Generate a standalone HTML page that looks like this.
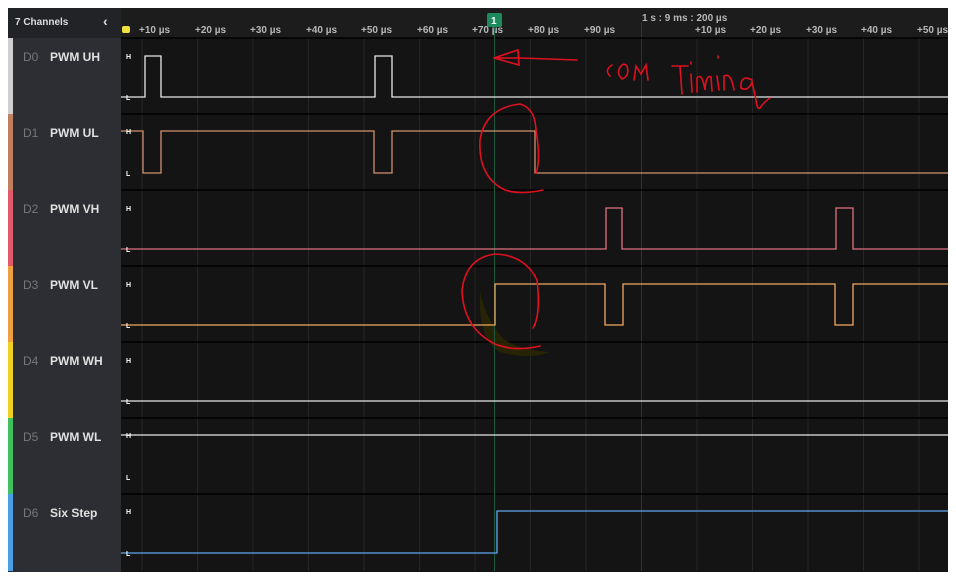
<!DOCTYPE html>
<html><head><style>
body{margin:0;background:#fff;width:956px;height:577px;overflow:hidden;font-family:"Liberation Sans",sans-serif}
.lbl{position:absolute;font-size:12px;font-weight:bold;color:#e0e0e0}
.d{position:absolute;font-size:12px;color:#777}
.t{font-size:10px;fill:#b8b8b8;font-weight:bold;font-family:"Liberation Sans",sans-serif}
.hl{font-size:7px;fill:#fff;font-weight:bold;font-family:"Liberation Sans",sans-serif}
</style></head><body>
<div style="position:absolute;left:8px;top:8px;width:940px;height:564px;background:#141414"></div>
<div style="position:absolute;left:8px;top:8px;width:113px;height:564px;background:#2d2e33"></div>
<div style="position:absolute;left:8px;top:8px;width:113px;height:30px;background:#222327"></div>
<div style="position:absolute;left:15px;top:17px;font-size:10px;color:#ddd;font-weight:bold">7 Channels</div>
<div style="position:absolute;left:103px;top:13px;font-size:14px;color:#ddd;font-weight:bold">‹</div>
<div style="position:absolute;left:8px;top:38px;width:5px;height:76px;background:#cfcfcf"></div>
<div style="position:absolute;left:8px;top:114px;width:5px;height:76px;background:#c08060"></div>
<div style="position:absolute;left:8px;top:190px;width:5px;height:76px;background:#e05a6a"></div>
<div style="position:absolute;left:8px;top:266px;width:5px;height:76px;background:#f0a040"></div>
<div style="position:absolute;left:8px;top:342px;width:5px;height:76px;background:#f0d020"></div>
<div style="position:absolute;left:8px;top:418px;width:5px;height:76px;background:#40c060"></div>
<div style="position:absolute;left:8px;top:494px;width:5px;height:77px;background:#4a9ee8"></div>
<div class="d" style="left:23px;top:50px">D0</div><div class="lbl" style="left:50px;top:50px">PWM UH</div>
<div class="d" style="left:23px;top:126px">D1</div><div class="lbl" style="left:50px;top:126px">PWM UL</div>
<div class="d" style="left:23px;top:202px">D2</div><div class="lbl" style="left:50px;top:202px">PWM VH</div>
<div class="d" style="left:23px;top:278px">D3</div><div class="lbl" style="left:50px;top:278px">PWM VL</div>
<div class="d" style="left:23px;top:354px">D4</div><div class="lbl" style="left:50px;top:354px">PWM WH</div>
<div class="d" style="left:23px;top:430px">D5</div><div class="lbl" style="left:50px;top:430px">PWM WL</div>
<div class="d" style="left:23px;top:506px">D6</div><div class="lbl" style="left:50px;top:506px">Six Step</div>
<svg width="956" height="577" style="position:absolute;left:0;top:0">
<rect x="121" y="8" width="827" height="30" fill="#1c1c1c"/>
<g stroke="#262626" stroke-width="1">
<line x1="142" y1="38" x2="142" y2="571"/><line x1="197.5" y1="38" x2="197.5" y2="571"/><line x1="253" y1="38" x2="253" y2="571"/><line x1="308.5" y1="38" x2="308.5" y2="571"/><line x1="364" y1="38" x2="364" y2="571"/><line x1="419.5" y1="38" x2="419.5" y2="571"/><line x1="475" y1="38" x2="475" y2="571"/><line x1="530.5" y1="38" x2="530.5" y2="571"/><line x1="586" y1="38" x2="586" y2="571"/><line x1="697" y1="38" x2="697" y2="571"/><line x1="752.5" y1="38" x2="752.5" y2="571"/><line x1="808" y1="38" x2="808" y2="571"/><line x1="863.5" y1="38" x2="863.5" y2="571"/><line x1="919" y1="38" x2="919" y2="571"/>
</g>
<line x1="641.5" y1="22" x2="641.5" y2="571" stroke="#333"/>
<g stroke="#000" stroke-width="1.5">
<line x1="121" y1="38" x2="948" y2="38"/><line x1="121" y1="114" x2="948" y2="114"/><line x1="121" y1="190" x2="948" y2="190"/><line x1="121" y1="266" x2="948" y2="266"/><line x1="121" y1="342" x2="948" y2="342"/><line x1="121" y1="418" x2="948" y2="418"/><line x1="121" y1="494" x2="948" y2="494"/>
</g>
<path d="M480,292 Q478,340 500,352 Q530,360 550,352 Q520,350 505,340 Q488,325 480,292Z" fill="#2a2800" opacity="0.8"/>
<rect x="122" y="26" width="8" height="7" fill="#f0e040" rx="2"/>
<g class="t">
<text x="139" y="33">+10 µs</text><text x="195" y="33">+20 µs</text><text x="250" y="33">+30 µs</text><text x="306" y="33">+40 µs</text><text x="361" y="33">+50 µs</text><text x="417" y="33">+60 µs</text><text x="472" y="33">+70 µs</text><text x="528" y="33">+80 µs</text><text x="584" y="33">+90 µs</text><text x="695" y="33">+10 µs</text><text x="750" y="33">+20 µs</text><text x="806" y="33">+30 µs</text><text x="861" y="33">+40 µs</text><text x="917" y="33">+50 µs</text>
<text x="642" y="21">1 s : 9 ms : 200 µs</text>
</g>
<line x1="494.5" y1="26" x2="494.5" y2="571" stroke="#1d5a40"/>
<rect x="487" y="13" width="15" height="14" rx="2" fill="#1d8a5e"/>
<text x="491" y="24" fill="#fff" font-size="10" font-weight="bold" font-family="Liberation Sans">1</text>
<g fill="none" stroke-width="1.3">
<polyline stroke="#e8e8e8" points="121,97 145,97 145,56 161,56 161,97 375,97 375,56 392,56 392,97 948,97"/>
<polyline stroke="#d09070" points="121,131 143,131 143,173 161,173 161,131 374,131 374,173 392,173 392,131 535,131 535,173 948,173"/>
<polyline stroke="#e07080" points="121,249 606,249 606,208 622,208 622,249 836,249 836,208 853,208 853,249 948,249"/>
<polyline stroke="#f0a860" points="121,325 495,325 495,284 605,284 605,325 623,325 623,284 835,284 835,325 853,325 853,284 948,284"/>
<polyline stroke="#e8e8e8" points="121,401 948,401"/>
<polyline stroke="#e8e8e8" points="121,435 948,435"/>
<polyline stroke="#60a8f0" points="121,553 497,553 497,511 948,511"/>
</g>
<g class="hl">
<text x="126" y="59">H</text><text x="126" y="100">L</text>
<text x="126" y="134">H</text><text x="126" y="176">L</text>
<text x="126" y="211">H</text><text x="126" y="252">L</text>
<text x="126" y="287">H</text><text x="126" y="328">L</text>
<text x="126" y="363">H</text><text x="126" y="404">L</text>
<text x="126" y="438">H</text><text x="126" y="480">L</text>
<text x="126" y="514">H</text><text x="126" y="556">L</text>
</g>
<g fill="none" stroke="#e01020" stroke-width="1.6" stroke-linecap="round">
<path d="M577,60 L520,58 L494,58 L518,50 L519,65 L494,58"/>
<path d="M612,65 Q604,70 610,76"/>
<path d="M622,65 Q615,72 622,79 Q630,76 627,66 Q624,63 622,65"/>
<path d="M634,80 L636,66 L641,74 L646,65 L648,80"/>
<path d="M672,66 L688,66 M680,66 L682,94"/>
<path d="M691,74 L692,92 M691,62 L691,64"/>
<path d="M697,92 L697,78 Q702,72 705,90 Q706,74 711,77 L712,91"/>
<path d="M717,76 L719,90 M718,56 L718,58"/>
<path d="M724,90 L724,76 Q731,72 734,90"/>
<path d="M752,80 Q740,74 741,88 Q748,92 752,82 L756,100 Q757,110 760,108 Q764,102 770,98"/>
<path d="M543,190 Q520,195 505,190 Q478,177 480,140 Q485,108 520,104 Q535,108 536,130 Q541,160 536,173"/>
<path d="M540,346 Q515,352 495,344 Q463,328 462,290 Q466,258 495,254 Q525,255 537,280 Q541,315 533,328"/>
</g>
</svg>
</body></html>
